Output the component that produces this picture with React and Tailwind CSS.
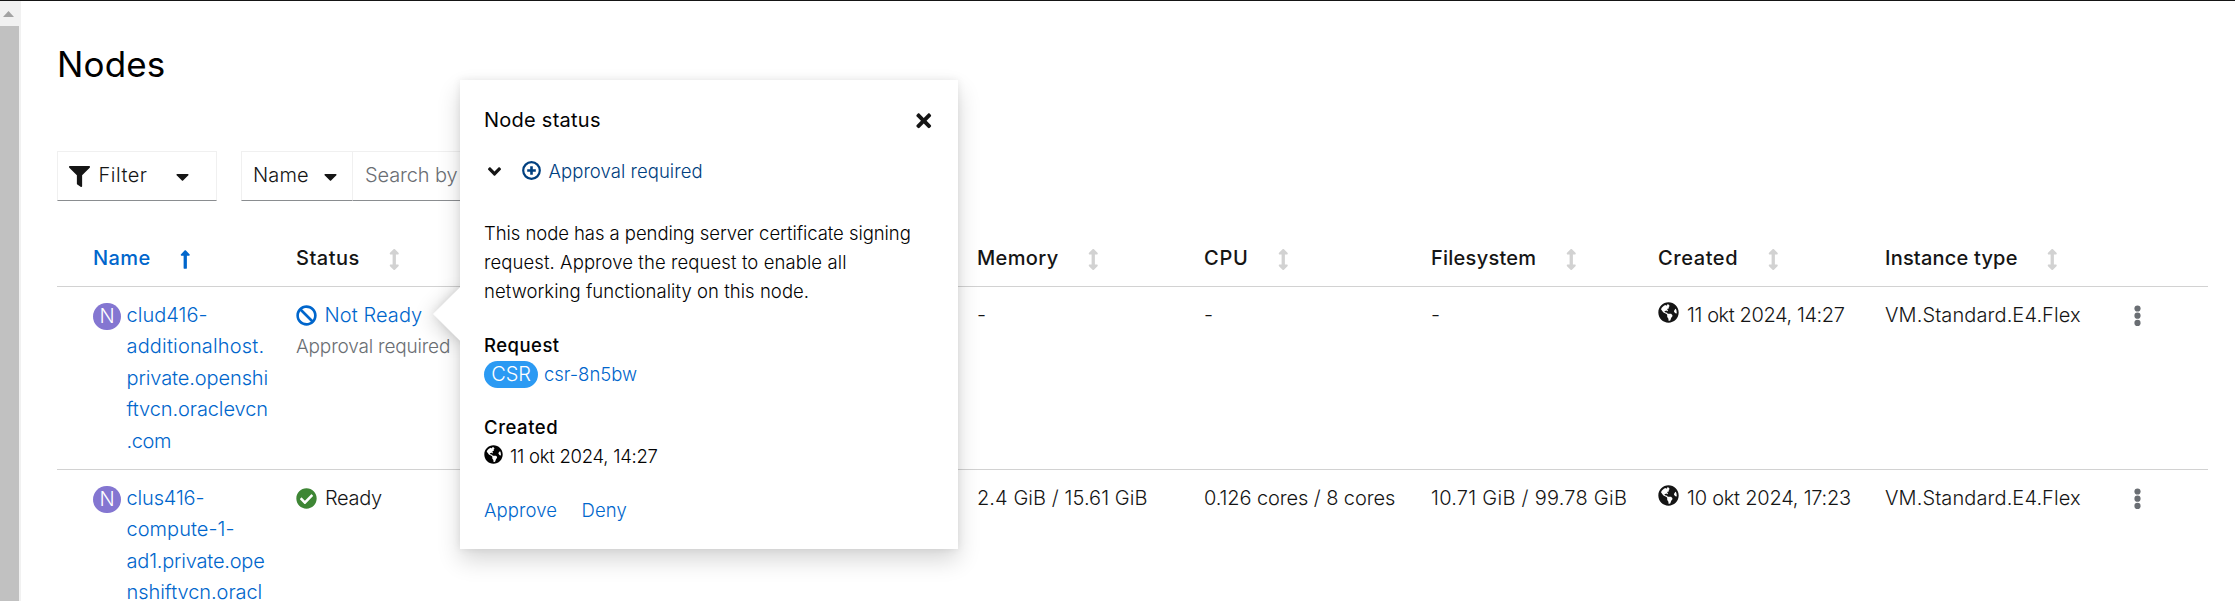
import React from "react";
import {
  FaFilter, FaCaretDown, FaLongArrowAltUp, FaArrowsAltV, FaBan, FaCheckCircle,
  FaGlobeAmericas, FaTimes, FaAngleDown,
} from "react-icons/fa";

const GRID = "grid shrink-0 grid-cols-[203px_repeat(8,227px)_1fr] pl-[36px]";

function Header({ label, tracking }) {
  return (
    <div className="flex items-center whitespace-nowrap font-medium text-[#151515]">
      <span className={tracking}>{label}</span>
      <FaArrowsAltV className="ml-[29.5px] h-[21px] w-[10.5px] shrink-0 text-[#d2d2d2]" />
    </div>
  );
}

function NodeName({ lines }) {
  return (
    <div className="flex items-start text-[#0066cc]">
      <span className="mt-[3px] flex h-[27px] w-[28px] shrink-0 items-center justify-center rounded-full bg-[#8476d1] text-[20px] leading-[27px] text-white">N</span>
      <div className="ml-[5.5px] flex flex-col">
        {lines.map(([text, tracking]) => (
          <span key={text} className={`whitespace-nowrap ${tracking}`}>{text}</span>
        ))}
      </div>
    </div>
  );
}

function Timestamp({ text, tracking }) {
  return (
    <div className="flex items-start whitespace-nowrap">
      <FaGlobeAmericas className="mt-[2px] mr-[8px] h-[21px] w-[21px] text-[#151515]" />
      <span className={tracking}>{text}</span>
    </div>
  );
}

function Kebab() {
  return (
    <div className="flex items-start pt-[5px]">
      <svg viewBox="0 0 7 22" className="ml-[22px] h-[22px] w-[7px] fill-[#6a6e73]">
        <circle cx="3.5" cy="3.5" r="3.1" />
        <circle cx="3.5" cy="10.7" r="3.1" />
        <circle cx="3.5" cy="17.9" r="3.1" />
      </svg>
    </div>
  );
}

function Popover() {
  return (
    <div className="absolute top-[80px] left-[460px] h-[469px] w-[498px]">
      <div className="absolute top-[215px] left-[-19px] h-[38px] w-[38px] rotate-45 bg-white shadow-[0_5px_20px_rgba(3,3,3,0.16),0_0_8px_rgba(3,3,3,0.08)]" />
      <div className="absolute inset-0 bg-white shadow-[0_11px_22px_rgba(3,3,3,0.16),0_0_8px_rgba(3,3,3,0.08)]" />
      <div className="absolute top-[215px] left-[-19px] h-[38px] w-[38px] rotate-45 bg-white" />
      <div className="relative flex flex-col px-[24px] pt-[26px] text-[18.5px] leading-[29px] text-[#030303]">
        <div className="flex items-center justify-between">
          <h2 className="text-[20px] font-normal tracking-[0.25px]">Node status</h2>
          <FaTimes className="h-[21.5px] w-[21.5px] text-[#151515]" />
        </div>
        <div className="mt-[22px] flex items-center text-[#004080]">
          <FaAngleDown className="h-[21px] w-[21px] text-[#151515]" />
          <svg viewBox="0 0 19 19" className="mr-[7.5px] ml-[17px] -mt-[3px] h-[19px] w-[19px] fill-none stroke-current">
            <circle cx="9.5" cy="9.5" r="8.3" strokeWidth="2.2" />
            <path d="M9.5 5.2v8.6M5.2 9.5h8.6" strokeWidth="2.6" />
          </svg>
          <span className="tracking-[0.06px]">Approval required</span>
        </div>
        <p className="mt-[33px] flex flex-col whitespace-nowrap">
          <span className="tracking-[-0.06px]">This node has a pending server certificate signing</span>
          <span className="tracking-[0.09px]">request. Approve the request to enable all</span>
          <span className="tracking-[0.05px]">networking functionality on this node.</span>
        </p>
        <div className="mt-[25px] font-medium tracking-[0.47px]">Request</div>
        <div className="flex items-center">
          <span className="flex h-[27px] w-[54px] items-center justify-center rounded-full bg-[#2b9af3] text-[20px] tracking-[-0.2px] text-white">CSR</span>
          <span className="ml-[6px] tracking-[-0.02px] text-[#0066cc]">csr-8n5bw</span>
        </div>
        <div className="mt-[24px] font-medium tracking-[0.56px]">Created</div>
        <div className="flex items-start">
          <FaGlobeAmericas className="mt-[2.5px] mr-[7px] h-[19px] w-[19px]" />
          <span className="tracking-[-0.26px]">11 okt 2024, 14:27</span>
        </div>
        <div className="mt-[25px] flex text-[#0066cc]">
          <span className="tracking-[0.11px]">Approve</span>
          <span className="ml-[24.5px] tracking-[0.1px]">Deny</span>
        </div>
      </div>
    </div>
  );
}

export default function App() {
  return (
    <div className="relative flex h-[601px] w-[2235px] overflow-hidden border-t border-[#151515] bg-white font-['Inter','Liberation_Sans',sans-serif] text-[20px] leading-[31.5px] font-light text-[#151515]">
      <div className="flex w-[21px] shrink-0 flex-col bg-[#f1f1f1]">
        <div className="flex h-[25px] w-[17px] justify-center pt-[10px]">
          <svg viewBox="0 0 11 6" className="h-[6px] w-[11px] fill-[#a3a3a3]"><path d="M5.5 0L11 6H0z" /></svg>
        </div>
        <div className="w-[19px] grow bg-[#c1c1c1]" />
      </div>

      <main className="ml-[36px] flex w-[2151px] shrink-0 flex-col">
        <h1 className="mt-[40px] shrink-0 text-[35px] leading-[46px] font-normal tracking-[0.15px] text-black">Nodes</h1>

        <div className="mt-[64px] flex h-[50px] shrink-0">
          <div className="flex w-[160px] items-center border border-[#f0f0f0] border-b-[#8a8d90] pl-[11px]">
            <FaFilter className="h-[21px] w-[21px]" />
            <span className="ml-[8.5px] tracking-[0.5px]">Filter</span>
            <FaCaretDown className="ml-[24.5px] h-[21px] w-[21px]" />
          </div>
          <div className="ml-[24px] flex w-[112px] items-center border border-[#f0f0f0] border-b-[#8a8d90] pl-[11px]">
            <span className="tracking-[0.13px]">Name</span>
            <FaCaretDown className="ml-[11.5px] h-[21px] w-[21px]" />
          </div>
          <div className="flex w-[300px] items-center border border-l-0 border-[#f0f0f0] border-b-[#8a8d90] pl-[12px] tracking-[-0.12px] text-[#6a6e73]">Search by</div>
        </div>

        <div className={`${GRID} mt-[30px] h-[56px] border-b border-[#d2d2d2] pt-px`}>
          <div className="flex items-center font-medium text-[#0066cc]">
            <span className="tracking-[0.42px]">Name</span>
            <FaLongArrowAltUp className="ml-[29.5px] h-[21px] w-[10.5px]" />
          </div>
          <Header label="Status" tracking="tracking-[0.52px]" />
          <div />
          <div />
          <Header label="Memory" tracking="tracking-[0.35px]" />
          <Header label="CPU" tracking="tracking-[0.8px]" />
          <Header label="Filesystem" tracking="tracking-[0.25px]" />
          <Header label="Created" tracking="tracking-[0.58px]" />
          <Header label="Instance type" tracking="tracking-[0.2px]" />
        </div>

        <div className={`${GRID} h-[183px] border-b border-[#d2d2d2] pt-[12.5px]`}>
          <NodeName
            lines={[
              ["clud416-", "tracking-[0.02px]"],
              ["additionalhost.", "tracking-[0.17px]"],
              ["private.openshi", "tracking-[-0.1px]"],
              ["ftvcn.oraclevcn", "tracking-[-0.1px]"],
              [".com", "tracking-[-0.4px]"],
            ]}
          />
          <div className="flex flex-col whitespace-nowrap">
            <div className="flex items-center text-[#0066cc]">
              <FaBan className="mr-[7.5px] h-[21px] w-[21px]" />
              <span className="tracking-[0.08px]">Not Ready</span>
            </div>
            <span className="text-[19px] tracking-[-0.18px] text-[#6a6e73]">Approval required</span>
          </div>
          <div />
          <div />
          <div>-</div>
          <div>-</div>
          <div>-</div>
          <Timestamp text="11 okt 2024, 14:27" tracking="tracking-[-0.4px]" />
          <div className="tracking-[0.1px]">VM.Standard.E4.Flex</div>
          <Kebab />
        </div>

        <div className={`${GRID} pt-[12.5px]`}>
          <NodeName
            lines={[
              ["clus416-", "tracking-[-0.16px]"],
              ["compute-1-", "tracking-[0.04px]"],
              ["ad1.private.ope", "tracking-[-0.2px]"],
              ["nshiftvcn.oracl", "tracking-[-0.06px]"],
            ]}
          />
          <div className="flex items-start whitespace-nowrap">
            <FaCheckCircle className="mt-[5px] mr-[8px] h-[21px] w-[21px] text-[#3e8635]" />
            <span className="tracking-[-0.33px]">Ready</span>
          </div>
          <div />
          <div />
          <div className="tracking-[0.07px]">2.4 GiB / 15.61 GiB</div>
          <div className="tracking-[-0.1px]">0.126 cores / 8 cores</div>
          <div className="tracking-[0.26px]">10.71 GiB / 99.78 GiB</div>
          <Timestamp text="10 okt 2024, 17:23" tracking="tracking-[-0.23px]" />
          <div className="tracking-[0.1px]">VM.Standard.E4.Flex</div>
          <Kebab />
        </div>
      </main>

      <div className="absolute top-[-1px] left-0">
        <Popover />
      </div>
    </div>
  );
}
